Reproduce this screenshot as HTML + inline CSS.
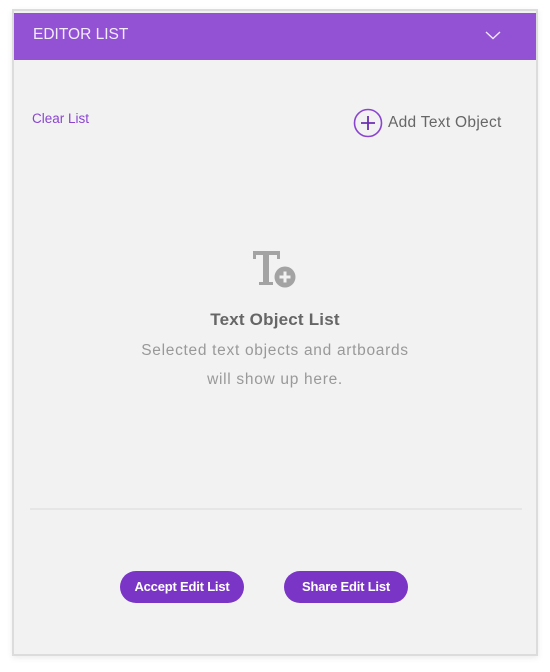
<!DOCTYPE html>
<html><head><meta charset="utf-8"><style>
html,body{margin:0;padding:0;background:#fff;width:550px;height:672px;overflow:hidden;font-family:"Liberation Sans",sans-serif}
.panel{position:absolute;left:12px;top:9px;width:522px;height:643px;border:2px solid #dcdcdc;background:#f2f2f2;box-shadow:0 2px 6px rgba(0,0,0,0.08)}
.hdr{position:absolute;left:0;top:2px;width:522px;height:47px;background:#9352d4;color:#f3ecfb;font-size:15.5px;line-height:44px}
.hdr span{position:absolute;left:19px}
.chev{position:absolute;left:470px;top:16px}
.clear{position:absolute;left:18px;top:100px;color:#8a45d0;font-size:13.5px}
.add{position:absolute;left:339px;top:97px;height:30px;display:flex;align-items:center;color:#666;font-size:15.5px;letter-spacing:0.3px}
.add svg{margin-right:5px}
.icon{position:absolute;left:238px;top:239px}
.t1{position:absolute;left:0;width:522px;text-align:center;top:299px;font-size:17px;font-weight:bold;color:#666;letter-spacing:0.2px}
.t2{position:absolute;left:0;width:522px;text-align:center;top:325px;font-size:15.5px;color:#999;line-height:29px;letter-spacing:0.7px}
.div{position:absolute;left:16px;top:497px;width:492px;height:2px;background:#e6e6e6}
.btn{position:absolute;top:560px;height:32px;width:124px;border-radius:16px;background:#7b35c6;color:#fff;font-size:13px;font-weight:bold;text-align:center;line-height:32px;letter-spacing:-0.2px}
</style></head><body>
<div class="panel">
<div class="hdr"><span>EDITOR LIST</span>
<svg class="chev" width="18" height="12" viewBox="0 0 18 12"><path d="M2 3 L9 9.5 L16 3" fill="none" stroke="#efe6fa" stroke-width="1.4"/></svg></div>
<div class="clear">Clear List</div>
<div class="add"><svg width="30" height="30" viewBox="0 0 30 30"><circle cx="15" cy="15" r="13.5" fill="none" stroke="#8a45d0" stroke-width="1.6"/><path d="M15 8v14M8 15h14" stroke="#6b2fb0" stroke-width="1.8"/></svg>Add Text Object</div>
<svg class="icon" width="50" height="45" viewBox="0 0 50 45"><path d="M1 1h27v8h-3V5H17v27h4v3H7v-3h4V5H4v4H1z" fill="#a3a3a3"/><circle cx="33" cy="27" r="10.5" fill="#a3a3a3"/><path d="M33 21.5v11M27.5 27h11" stroke="#f2f2f2" stroke-width="3"/></svg>
<div class="t1">Text Object List</div>
<div class="t2">Selected text objects and artboards<br>will show up here.</div>
<div class="div"></div>
<div class="btn" style="left:106px">Accept Edit List</div>
<div class="btn" style="left:270px">Share Edit List</div>
</div>
</body></html>
